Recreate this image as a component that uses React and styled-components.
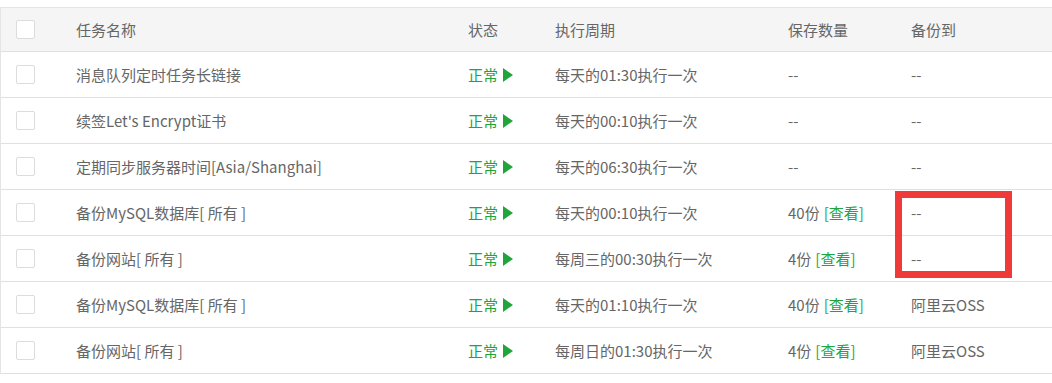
import React from "react";
import styled, { createGlobalStyle } from "styled-components";

const Global = createGlobalStyle`
  html, body { margin: 0; padding: 0; background: #fff; overflow: hidden; }
  body { font-family: "Noto Sans CJK SC", "Noto Sans", sans-serif; }
`;

const Page = styled.div`
  position: relative;
  width: 1052px;
  height: 383px;
  padding-top: 7px;
  box-sizing: border-box;
  overflow: hidden;
`;

const Table = styled.div`
  width: 1100px;
  border-top: 1px solid #e4e4e4;
  border-left: 1px solid #e4e4e4;
  box-sizing: border-box;
`;

const cols = "60px 392px 87px 233px 123px 1fr";

const Row = styled.div`
  display: grid;
  grid-template-columns: ${cols};
  height: ${(p) => (p.$head ? 44 : 46)}px;
  box-sizing: border-box;
  border-bottom: 1px solid #e0e0e0;
  background: ${(p) => (p.$head ? "#f5f5f5" : "#fff")};
  align-items: center;
  font-size: 15px;
  color: #666;
`;

const Cell = styled.div`
  padding-left: 15px;
  white-space: nowrap;
  display: flex;
  align-items: center;
  line-height: 20px;
`;

const Box = styled.span`
  display: inline-block;
  width: 17px;
  height: 17px;
  border: 1px solid #dcdcdc;
  border-radius: 2px;
  background: #fff;
`;

const Status = styled.span`
  color: #20a53a;
  display: inline-flex;
  align-items: center;
`;

const Play = styled.span`
  display: inline-block;
  width: 0;
  height: 0;
  margin-left: 5px;
  border-top: 7px solid transparent;
  border-bottom: 7px solid transparent;
  border-left: 10px solid #20a53a;
`;

const Link = styled.span`
  color: #20a53a;
  margin-left: 4px;
`;

const Mark = styled.div`
  position: absolute;
  left: 895px;
  top: 191px;
  width: 117px;
  height: 87px;
  border: 7px solid #f03a3a;
  box-sizing: border-box;
`;

const rows = [
  { name: "消息队列定时任务长链接", cycle: "每天的01:30执行一次", count: null, to: "--" },
  { name: "续签Let's Encrypt证书", cycle: "每天的00:10执行一次", count: null, to: "--" },
  { name: "定期同步服务器时间[Asia/Shanghai]", cycle: "每天的06:30执行一次", count: null, to: "--" },
  { name: "备份MySQL数据库[ 所有 ]", cycle: "每天的00:10执行一次", count: "40份", to: "--" },
  { name: "备份网站[ 所有 ]", cycle: "每周三的00:30执行一次", count: "4份", to: "--" },
  { name: "备份MySQL数据库[ 所有 ]", cycle: "每天的01:10执行一次", count: "40份", to: "阿里云OSS" },
  { name: "备份网站[ 所有 ]", cycle: "每周日的01:30执行一次", count: "4份", to: "阿里云OSS" },
];

export default function App() {
  return (
    <Page>
      <Global />
      <Table>
        <Row $head>
          <Cell><Box /></Cell>
          <Cell>任务名称</Cell>
          <Cell>状态</Cell>
          <Cell>执行周期</Cell>
          <Cell>保存数量</Cell>
          <Cell>备份到</Cell>
        </Row>
        {rows.map((r, i) => (
          <Row key={i}>
            <Cell><Box /></Cell>
            <Cell>{r.name}</Cell>
            <Cell>
              <Status>正常<Play /></Status>
            </Cell>
            <Cell>{r.cycle}</Cell>
            <Cell>
              {r.count ? (
                <>
                  {r.count}
                  <Link>[查看]</Link>
                </>
              ) : (
                "--"
              )}
            </Cell>
            <Cell>{r.to}</Cell>
          </Row>
        ))}
      </Table>
      <Mark />
    </Page>
  );
}
